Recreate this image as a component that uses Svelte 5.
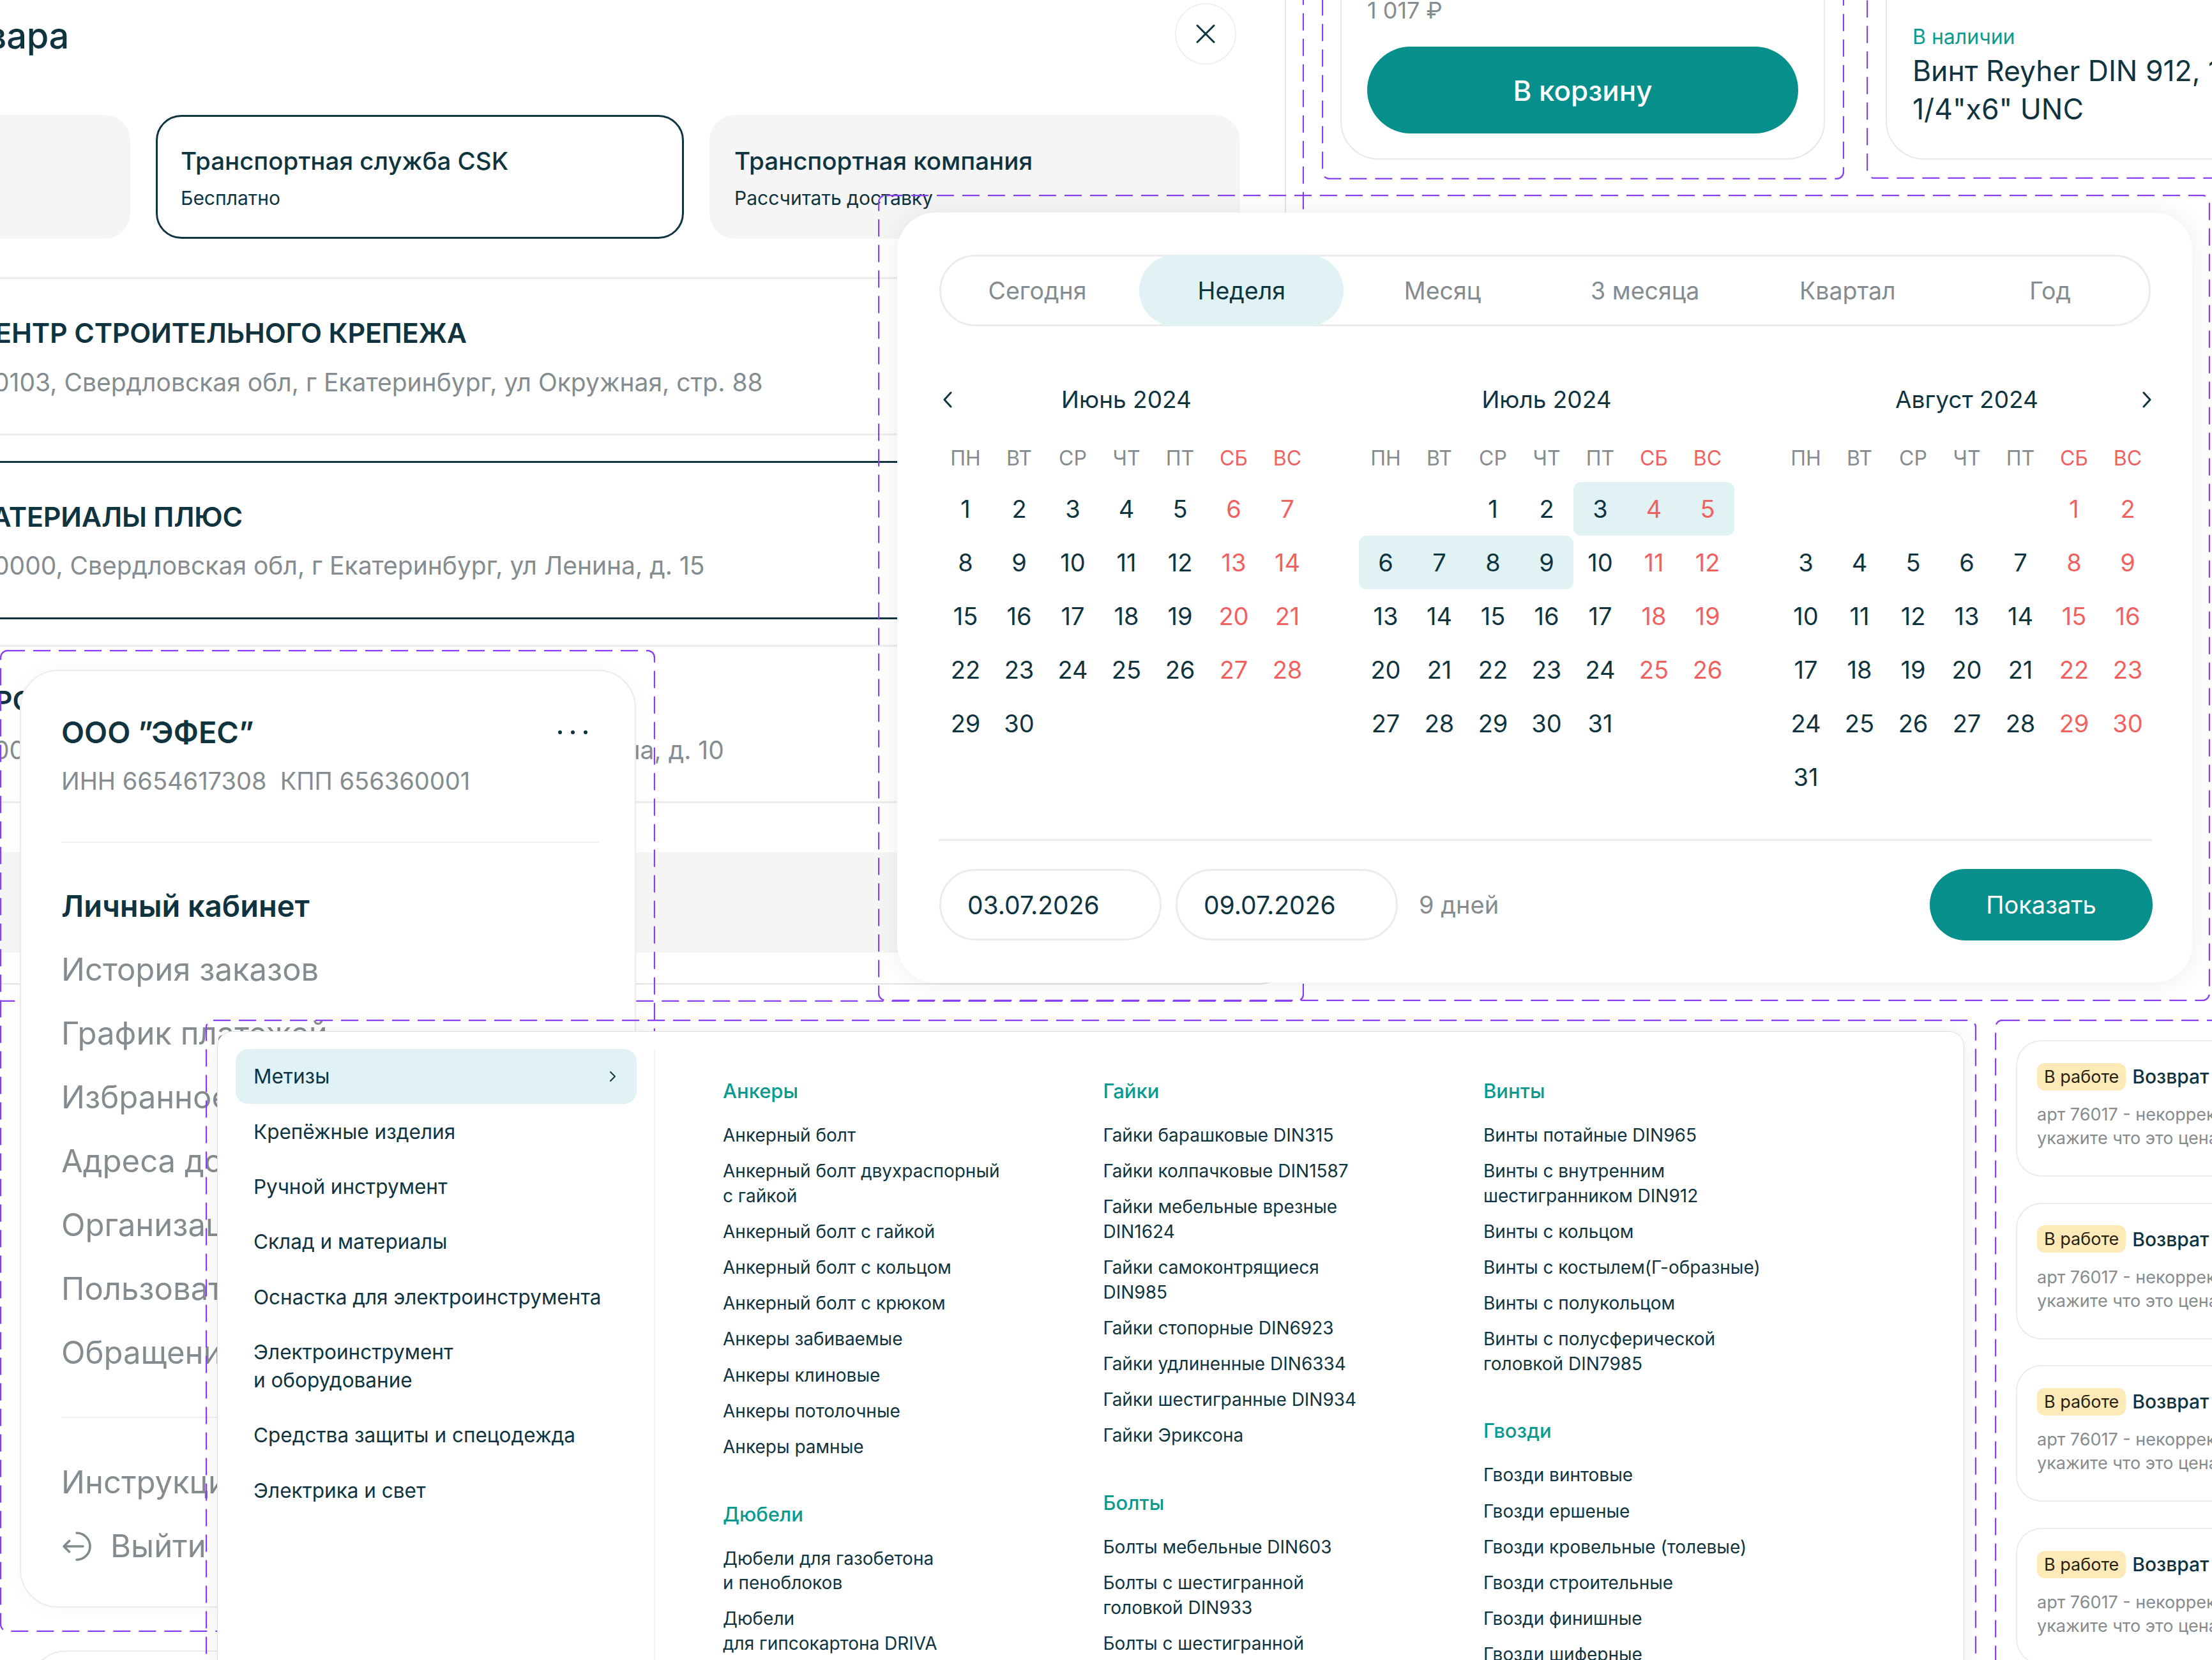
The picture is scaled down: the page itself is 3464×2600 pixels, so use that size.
<script>
  const rows = [
    { title: 'ЦЕНТР СТРОИТЕЛЬНОГО КРЕПЕЖА', addr: '620103, Свердловская обл, г Екатеринбург, ул Окружная, стр. 88', dark: false },
    { title: 'МАТЕРИАЛЫ ПЛЮС', addr: '620000, Свердловская обл, г Екатеринбург, ул Ленина, д. 15', dark: true },
    { title: 'ПРОМКРЕПЁЖ', addr: '620000, Свердловская обл, г Екатеринбург, ул Гагарина, д. 10', dark: false }
  ];
  const tabs = ['Сегодня', 'Неделя', 'Месяц', '3 месяца', 'Квартал', 'Год'];
  const weekdays = ['ПН', 'ВТ', 'СР', 'ЧТ', 'ПТ', 'СБ', 'ВС'];
  const months = [
    { name: 'Июнь 2024', offset: 0, days: 30 },
    { name: 'Июль 2024', offset: 2, days: 31, sel: [3, 9] },
    { name: 'Август 2024', offset: 5, days: 31 }
  ];
  function cells(m) {
    const out = [];
    for (let i = 0; i < m.offset; i++) out.push({ d: null, cls: '' });
    for (let d = 1; d <= m.days; d++) {
      const col = (m.offset + d - 1) % 7;
      let cls = col >= 5 ? 'red' : '';
      if (m.sel && d >= m.sel[0] && d <= m.sel[1]) {
        cls += ' sel';
        if (d === m.sel[0] || col === 0) cls += ' first';
        if (d === m.sel[1] || col === 6) cls += ' last';
      }
      out.push({ d, cls });
    }
    return out;
  }
  const accountLinks = ['История заказов', 'График платежей', 'Избранное', 'Адреса доставки', 'Организации', 'Пользователи', 'Обращения'];
  const categories = ['Метизы', 'Крепёжные изделия', 'Ручной инструмент', 'Склад и материалы', 'Оснастка для электроинструмента', 'Электроинструмент\nи оборудование', 'Средства защиты и спецодежда', 'Электрика и свет'];
  const columns = [
    [
      { h: 'Анкеры', items: ['Анкерный болт', 'Анкерный болт двухраспорный\nс гайкой', 'Анкерный болт с гайкой', 'Анкерный болт с кольцом', 'Анкерный болт с крюком', 'Анкеры забиваемые', 'Анкеры клиновые', 'Анкеры потолочные', 'Анкеры рамные'] },
      { h: 'Дюбели', items: ['Дюбели для газобетона\nи пеноблоков', 'Дюбели\nдля гипсокартона DRIVA'] }
    ],
    [
      { h: 'Гайки', items: ['Гайки барашковые DIN315', 'Гайки колпачковые DIN1587', 'Гайки мебельные врезные\nDIN1624', 'Гайки самоконтрящиеся\nDIN985', 'Гайки стопорные DIN6923', 'Гайки удлиненные DIN6334', 'Гайки шестигранные DIN934', 'Гайки Эриксона'] },
      { h: 'Болты', items: ['Болты мебельные DIN603', 'Болты с шестигранной\nголовкой DIN933', 'Болты с шестигранной\nголовкой DIN931'] }
    ],
    [
      { h: 'Винты', items: ['Винты потайные DIN965', 'Винты с внутренним\nшестигранником DIN912', 'Винты с кольцом', 'Винты с костылем(Г-образные)', 'Винты с полукольцом', 'Винты с полусферической\nголовкой DIN7985'] },
      { h: 'Гвозди', items: ['Гвозди винтовые', 'Гвозди ершеные', 'Гвозди кровельные (толевые)', 'Гвозди строительные', 'Гвозди финишные', 'Гвозди шиферные'] }
    ]
  ];
</script>

{#snippet dashed(cls, w, h)}
  <svg class="dash {cls}" width={w} height={h} viewBox="0 0 {w} {h}" fill="none">
    <rect x="1" y="1" width={w - 2} height={h - 2} rx="11" stroke="#8b3ff5" stroke-width="2.4" stroke-dasharray="27 13" />
  </svg>
{/snippet}

<div class="canvas">
  <section class="modal">
    <div class="modal-head">
      <h2>Выбор способа доставки товара</h2>
    </div>
    <button class="close" aria-label="Закрыть">
      <svg width="30" height="30" viewBox="0 0 30 30" fill="none"><path d="M2 2 28 28M28 2 2 28" stroke="#0f3440" stroke-width="3" stroke-linecap="round" /></svg>
    </button>
    <div class="delivery">
      <div class="dcard first"></div>
      <div class="dcard active">
        <strong>Транспортная служба CSK</strong>
        <span>Бесплатно</span>
      </div>
      <div class="dcard other">
        <strong>Транспортная компания</strong>
        <span>Рассчитать доставку</span>
      </div>
    </div>
    <div class="rows">
      {#each rows as r}
        <div class="row" class:dark={r.dark}>
          <div class="row-title">{r.title}</div>
          <div class="row-addr">{r.addr}</div>
        </div>
      {/each}
      <div class="row-block"></div>
    </div>
  </section>
  {@render dashed('f-modal', 2140, 1667)}

  <section class="product buy">
    <div class="price">1 017 ₽</div>
    <button class="buy-btn">В корзину</button>
  </section>
  {@render dashed('f-buy', 818, 380)}

  <section class="product info">
    <div class="stock">В наличии</div>
    <div class="pname">Винт Reyher DIN 912, 1<br />1/4"х6" UNC</div>
  </section>
  {@render dashed('f-info', 640, 380)}

  {@render dashed('f-side', 1026, 1538)}
  <aside class="side">
    <div class="org">
      <h3>ООО ”ЭФЕС”</h3>
      <span class="dots"><i></i><i></i><i></i></span>
    </div>
    <div class="inn">ИНН 6654617308&nbsp; КПП 656360001</div>
    <hr />
    <div class="lk">Личный кабинет</div>
    {#each accountLinks as l}
      <div class="lnk">{l}</div>
    {/each}
    <hr class="second" />
    <div class="lnk">Инструкции</div>
    <div class="lnk exit">
      <svg width="48" height="48" viewBox="0 0 48 48" fill="none"><path d="M22 3A21 21 0 0 1 22 45M2 24H32M2 24l8.5-8.5M2 24l8.5 8.5" stroke="#7f8a8c" stroke-width="3.6" stroke-linecap="round" stroke-linejoin="round" /></svg>
      Выйти
    </div>
  </aside>
  <div class="side-next"></div>

  {@render dashed('f-cal', 2086, 1263)}
  <section class="cal">
    <div class="tabs">
      {#each tabs as t, i}
        <div class="tab" class:on={i === 1}>{t}</div>
      {/each}
    </div>
    <div class="months">
      <svg class="chev left" width="18" height="26" viewBox="0 0 18 26" fill="none"><path d="M14 2 4 13l10 11" stroke="#0f3440" stroke-width="3" stroke-linecap="round" stroke-linejoin="round" /></svg>
      <svg class="chev right" width="18" height="26" viewBox="0 0 18 26" fill="none"><path d="M4 2l10 11L4 24" stroke="#0f3440" stroke-width="3" stroke-linecap="round" stroke-linejoin="round" /></svg>
      {#each months as m}
        <div class="month">
          <div class="mname">{m.name}</div>
          <div class="grid weeks">
            {#each weekdays as w, i}
              <div class="wd" class:red={i >= 5}>{w}</div>
            {/each}
          </div>
          <div class="grid">
            {#each cells(m) as c}
              <div class="day {c.cls}">{c.d ?? ''}</div>
            {/each}
          </div>
        </div>
      {/each}
    </div>
    <div class="cal-foot">
      <div class="date">03.07.2026</div>
      <div class="date">09.07.2026</div>
      <div class="count">9 дней</div>
      <button class="show">Показать</button>
    </div>
  </section>

  {@render dashed('f-menu', 2773, 1100)}
  <section class="menu">
    <div class="cats">
      {#each categories as c, i}
        <div class="cat" class:on={i === 0}>
          <span>{c}</span>
          {#if i === 0}
            <svg width="12" height="20" viewBox="0 0 12 20" fill="none"><path d="M3 3l7 7-7 7" stroke="#0f3440" stroke-width="2" stroke-linecap="round" stroke-linejoin="round" /></svg>
          {/if}
        </div>
      {/each}
    </div>
    <div class="cols">
      {#each columns as col}
        <div class="col">
          {#each col as g}
            <div class="group">
              <div class="gh">{g.h}</div>
              {#each g.items as it}
                <div class="gi">{it}</div>
              {/each}
            </div>
          {/each}
        </div>
      {/each}
    </div>
  </section>

  {@render dashed('f-req', 400, 1100)}
  <section class="reqs">
    {#each [0, 1, 2, 3] as n (n)}
      <article class="req">
        <div class="req-head"><span class="badge">В работе</span><b>Возврат №{76017 + n}</b></div>
        <p>арт 76017 - некорректная цена,<br />укажите что это цена за штуку</p>
      </article>
    {/each}
  </section>
</div>

<style>
  :global(body) { margin: 0; background: #fff; }
  .canvas {
    position: relative; width: 3464px; height: 2600px; overflow: hidden; background: #fff;
    font-family: Inter, "Noto Sans", sans-serif; color: #0f3440;
  }
  .dash { position: absolute; display: block; }
  .f-modal { left: -98px; top: -98px; }
  .f-buy { left: 2070px; top: -99px; }
  .f-info { left: 2923px; top: -100px; }
  .f-side { left: 0; top: 1018px; }
  .f-cal { left: 1375px; top: 305px; }
  .f-menu { left: 322px; top: 1597px; }
  .f-req { left: 3124px; top: 1597px; }

  .modal {
    position: absolute; left: -100px; top: -100px; width: 2114px; height: 1642px; box-sizing: border-box;
    border: 2px solid #e4e4e4; border-radius: 40px; background: #fff;
  }
  .modal-head { display: flex; justify-content: flex-end; width: 206px; height: 276px; align-items: flex-end; }
  h2 { margin: 0 0 88px; font-size: 56px; font-weight: 500; line-height: 68px; white-space: nowrap; letter-spacing: -0.3px; }
  .close {
    position: absolute; left: 1938px; top: 103px; width: 96px; height: 96px; border: 2px solid #f0f0f0; border-radius: 50%;
    background: #fff; display: flex; align-items: center; justify-content: center; padding: 0;
  }
  .delivery { display: flex; gap: 40px; height: 194px; margin-top: 2px; }
  .dcard {
    box-sizing: border-box; border-radius: 40px; background: #f5f5f5; padding: 44px 39px 0; display: flex; flex-direction: column;
  }
  .dcard.first { width: 302px; }
  .dcard.active { width: 827px; background: #fff; border: 3px solid #0f3440; padding: 41px 36px 0; }
  .dcard.other { width: 831px; }
  .dcard strong { font-size: 38.5px; font-weight: 500; line-height: 56px; white-space: nowrap; }
  .dcard span { font-size: 30px; line-height: 40px; margin-top: 10px; white-space: nowrap; }
  .rows { margin-top: 60px; }
  .row {
    box-sizing: border-box; height: 248px; margin-bottom: 40px; border-top: 3px solid #eceeee; border-bottom: 3px solid #eceeee;
    padding: 54px 0 0 40px; white-space: nowrap;
  }
  .row.dark { border-color: #0f3440; }
  .row-title { font-size: 43px; font-weight: 600; line-height: 60px; letter-spacing: -0.2px; margin-left: 18px; }
  .row.dark .row-title { margin-left: 5px; }
  .row-addr { font-size: 39px; line-height: 50px; color: #858c8f; margin-top: 23px; }
  .row.dark .row-addr { margin-top: 22px; }
  .row-block { height: 157px; margin-top: 77px; background: #f5f5f5; }

  .product {
    position: absolute; top: -100px; height: 350px; box-sizing: border-box; border: 2px solid #e8e8e8; border-radius: 60px; background: #fff;
  }
  .buy { left: 2099px; width: 759px; padding: 84px 40px 0; }
  .info { left: 2953px; width: 700px; padding: 132px 40px 0; }
  .price { font-size: 36px; line-height: 60px; color: #858c8f; }
  .buy-btn {
    display: block; margin-top: 27px; width: 675px; height: 136px; border: 0; border-radius: 68px; background: #068f8b; color: #fff;
    font: 500 44px Inter, sans-serif; padding-top: 2px;
  }
  .stock { font-size: 32px; line-height: 48px; color: #0b9a8e; }
  .pname { font-size: 44.5px; line-height: 60px; margin-top: -1px; white-space: nowrap; }

  .side {
    position: absolute; left: 31px; top: 1049px; width: 965px; height: 1469px; box-sizing: border-box; padding: 68px 56px 0 63px;
    border: 2px solid #ececec; border-radius: 60px; background: #fff; box-shadow: 0 0 30px rgba(0, 0, 0, 0.03);
  }
  .org { display: flex; justify-content: space-between; align-items: center; height: 56px; padding-right: 18px; }
  h3 { margin: 0; font-size: 47px; font-weight: 600; line-height: 56px; white-space: nowrap; }
  .dots { display: flex; gap: 14px; }
  .dots i { width: 6px; height: 6px; border-radius: 50%; background: #0f3440; }
  .inn { font-size: 38px; line-height: 50px; color: #858c8f; margin-top: 23px; white-space: nowrap; }
  hr { border: 0; height: 2px; background: #f0f0f0; margin: 70px 0 0; }
  .lk { font-size: 47px; font-weight: 600; line-height: 60px; margin-top: 69px; white-space: nowrap; }
  .lnk { font-size: 49px; line-height: 60px; margin-top: 40px; color: #858c8f; white-space: nowrap; }
  hr.second { margin-top: 70px; }
  hr.second + .lnk { margin-top: 71px; }
  .exit { display: flex; align-items: center; gap: 27px; margin-left: 2px; }
  .side-next {
    position: absolute; left: 44px; top: 2585px; width: 940px; height: 200px; border: 2px solid #ececec; border-radius: 60px; background: #fff;
  }

  .cal {
    position: absolute; left: 1405px; top: 333px; width: 2028px; height: 1206px; box-sizing: border-box; padding: 66px 62px 0 66px;
    background: #fff; border-radius: 60px; box-shadow: 0 0 40px rgba(0, 0, 0, 0.08);
  }
  .tabs {
    display: grid; grid-template-columns: repeat(6, 317.2px); box-sizing: border-box; height: 112px; width: 1897px;
    border: 3px solid #ececec; border-radius: 56px; align-items: center;
  }
  .tab { height: 112px; margin: -3px 8px -3px -8px; display: flex; align-items: center; justify-content: center; font-size: 37.5px; color: #858c8f; white-space: nowrap; border-radius: 56px; }
  .tab.on { background: #e0f2f4; color: #0f3440; margin-right: 4px; margin-left: -7px; }
  .months { position: relative; display: flex; gap: 70px; margin: 85px 0 0 -1px; height: 721px; border-bottom: 3px solid #ececec; box-sizing: border-box; width: 1900px; }
  .chev { position: absolute; top: 17px; }
  .chev.left { left: 5px; }
  .chev.right { left: 1883px; }
  .month { width: 588px; }
  .mname { height: 60px; line-height: 60px; text-align: center; font-size: 37px; }
  .grid { display: grid; grid-template-columns: repeat(7, 84px); grid-auto-rows: 84px; }
  .weeks { margin-top: 29px; grid-auto-rows: 64px; margin-bottom: 6px; }
  .wd { display: flex; align-items: center; justify-content: center; font-size: 32px; color: #858c8f; }
  .day { display: flex; align-items: center; justify-content: center; font-size: 38px; }
  .wd.red, .day.red { color: #f0615f; }
  .sel { background: #e0f2f4; }
  .sel.first { border-radius: 12px 0 0 12px; }
  .sel.last { border-radius: 0 12px 12px 0; }
  .cal-foot { display: flex; align-items: center; gap: 22px; margin-top: 44px; width: 1900px; }
  .date {
    box-sizing: border-box; width: 348px; height: 112px; border: 3px solid #ececec; border-radius: 56px; padding-left: 41px;
    display: flex; align-items: center; font-size: 39px;
  }
  .count { font-size: 38px; color: #858c8f; margin-left: 11px; flex: 1; }
  .show { width: 349px; height: 112px; border: 0; border-radius: 56px; background: #068f8b; color: #fff; font: 38px Inter, sans-serif; }

  .menu {
    position: absolute; left: 340px; top: 1615px; width: 2736px; height: 1100px; box-sizing: border-box; display: flex;
    border: 1px solid #dedede; border-radius: 24px; background: #fff; box-shadow: 0 0 36px rgba(0, 0, 0, 0.07); padding-top: 27px;
  }
  .cats { width: 685px; height: 1000px; padding-left: 28px; box-sizing: border-box; border-right: 2px solid #f5f5f5; flex: none; }
  .cat {
    box-sizing: border-box; width: 628px; min-height: 86.4px; padding: 21px 32px 21px 28px; display: flex; justify-content: space-between; align-items: center;
    font-size: 31.5px; line-height: 44px; white-space: pre-line; border-radius: 20px;
  }
  .cat.on { background: #e0f2f4; }
  .cols { display: flex; padding: 46px 0 0 106px; }
  .col { width: 595.5px; }
  .group { margin-bottom: 66px; }
  .gh { font-size: 31px; font-weight: 500; color: #0b9a8e; line-height: 40px; margin-bottom: 30px; }
  .gi { font-size: 28px; line-height: 38.5px; margin-top: 17.7px; white-space: pre-line; }

  .reqs { position: absolute; left: 3157px; top: 1629px; display: flex; flex-direction: column; gap: 40.7px; width: 600px; }
  .req { box-sizing: border-box; height: 214px; border: 2px solid #ececec; border-radius: 40px; padding: 33px 0 0 31px; background: #fff; }
  .req-head { display: flex; align-items: center; gap: 10px; height: 44px; white-space: nowrap; }
  .badge { background: #fdeab8; color: #2a1f0a; font-size: 27px; line-height: 43px; height: 43px; padding: 0 11px; border-radius: 12px; }
  .req-head b { font-size: 30px; font-weight: 500; }
  p { margin: 19px 0 0; font-size: 27px; line-height: 37px; color: #858c8f; white-space: nowrap; }
</style>
